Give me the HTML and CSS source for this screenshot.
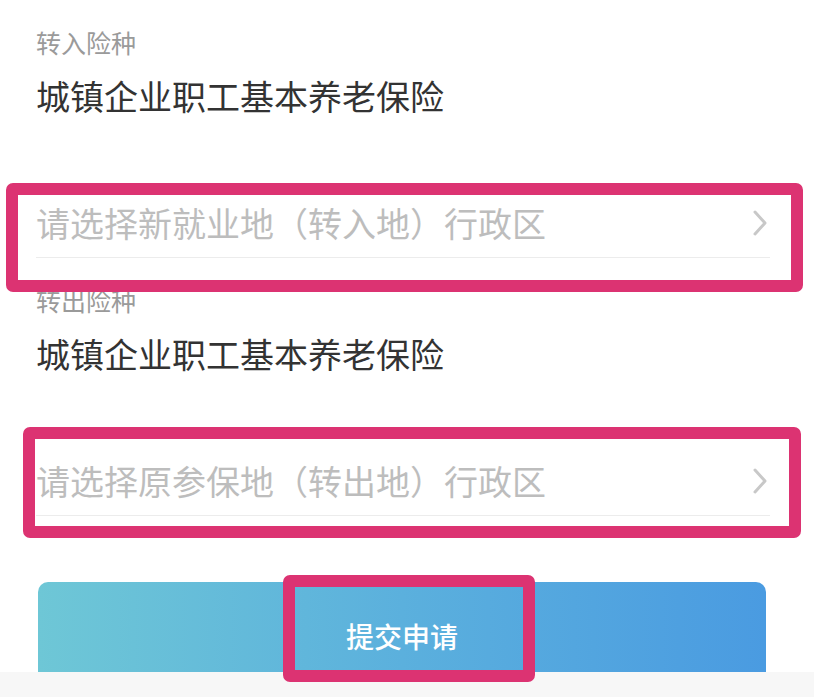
FILE: index.html
```html
<!DOCTYPE html>
<html lang="zh-CN">
<head>
<meta charset="utf-8">
<title>社保转移</title>
<link rel="stylesheet" href="styles.css">
</head>
<body>
<div class="page">
  <section class="section">
    <div class="label">转入险种</div>
    <div class="value">城镇企业职工基本养老保险</div>
    <div class="picker">
      <span class="placeholder">请选择新就业地（转入地）行政区</span>
      <svg class="chev" width="16" height="28" viewBox="0 0 16 28"><polyline points="3,3 13,14 3,25" fill="none" stroke="#c8c8c8" stroke-width="3" stroke-linecap="round" stroke-linejoin="round"/></svg>
    </div>
  </section>
  <section class="section">
    <div class="label">转出险种</div>
    <div class="value">城镇企业职工基本养老保险</div>
    <div class="picker">
      <span class="placeholder">请选择原参保地（转出地）行政区</span>
      <svg class="chev" width="16" height="28" viewBox="0 0 16 28"><polyline points="3,3 13,14 3,25" fill="none" stroke="#c8c8c8" stroke-width="3" stroke-linecap="round" stroke-linejoin="round"/></svg>
    </div>
  </section>
  <div class="actions">
    <div class="submit">提交申请</div>
  </div>
  <div class="footer-band"></div>

  <div class="mark mark-1"></div>
  <div class="mark mark-2"></div>
  <div class="mark mark-3"></div>
</div>
</body>
</html>
```

FILE: styles.css
```css
html, body {
  margin: 0;
  padding: 0;
  background: #ffffff;
}
body {
  font-family: "Noto Sans CJK SC", "Noto Sans", sans-serif;
  width: 814px;
  height: 697px;
  overflow: hidden;
}
.page {
  position: relative;
  width: 814px;
  height: 697px;
}
.section {
  padding: 24px 44px 0 36px;
  height: 258px;
  box-sizing: border-box;
}
.label {
  font-size: 25px;
  line-height: 36px;
  height: 36px;
  color: #9a9a9a;
}
.value {
  margin-top: 14px;
  font-size: 34px;
  line-height: 44px;
  height: 44px;
  color: #333333;
}
.picker {
  margin-top: 70px;
  height: 70px;
  box-sizing: border-box;
  border-bottom: 1px solid #ececec;
  display: flex;
  align-items: center;
  justify-content: space-between;
}
.placeholder {
  font-size: 34px;
  line-height: 44px;
  color: #bdbdbd;
}
.chev {
  margin-right: 2px;
  display: block;
}
.actions {
  padding: 66px 48px 0 38px;
}
.submit {
  height: 90px;
  box-sizing: border-box;
  padding-top: 18px;
  border-radius: 10px 10px 0 0;
  background: linear-gradient(90deg, #6ec7d6 0%, #5bb0dd 50%, #4a9be1 100%);
  color: #ffffff;
  font-size: 28px;
  font-weight: 500;
  display: flex;
  align-items: center;
  justify-content: center;
}
.footer-band {
  height: 25px;
  background: #f7f7f7;
}
.mark {
  position: absolute;
  border: 12px solid #dc3372;
  border-radius: 7px;
  box-sizing: border-box;
}
.mark-1 {
  left: 6px;
  top: 183px;
  width: 797px;
  height: 109px;
}
.mark-2 {
  left: 23px;
  top: 427px;
  width: 778px;
  height: 111px;
}
.mark-3 {
  left: 283px;
  top: 575px;
  width: 252px;
  height: 107px;
}
```
